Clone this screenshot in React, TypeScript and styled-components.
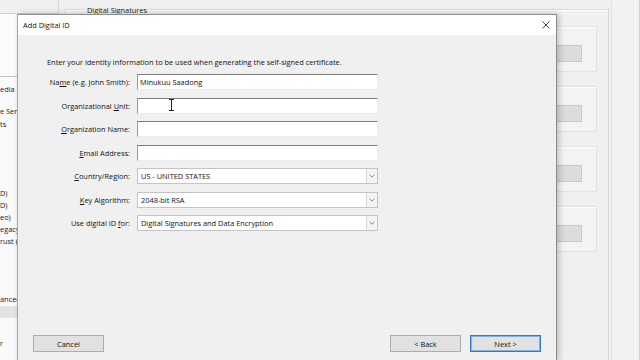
import React from "react";
import styled, { createGlobalStyle } from "styled-components";

type TreeItem = { text: string; gap: number; selected?: boolean };

const treeItems: TreeItem[] = [
  { text: "edia", gap: 6 },
  { text: "e Services", gap: 10 },
  { text: "ts", gap: 1 },
  { text: "D)", gap: 57 },
  { text: "D)", gap: 0 },
  { text: "eo)", gap: 0 },
  { text: "egacy", gap: 0 },
  { text: "rust (", gap: 0 },
  { text: "anced", gap: 46 },
  { text: "", gap: 1, selected: true },
  { text: "r", gap: 19 },
];

type Field = {
  label: React.ReactNode;
  kind: "text" | "select";
  value?: string;
};

const fields: Field[] = [
  {
    label: (
      <>
        Na<u>m</u>e (e.g. John Smith):
      </>
    ),
    kind: "text",
    value: "Minukuu Saadong",
  },
  {
    label: (
      <>
        Organizational <u>U</u>nit:
      </>
    ),
    kind: "text",
  },
  {
    label: (
      <>
        <u>O</u>rganization Name:
      </>
    ),
    kind: "text",
  },
  {
    label: (
      <>
        <u>E</u>mail Address:
      </>
    ),
    kind: "text",
  },
  {
    label: (
      <>
        <u>C</u>ountry/Region:
      </>
    ),
    kind: "select",
    value: "US - UNITED STATES",
  },
  {
    label: (
      <>
        <u>K</u>ey Algorithm:
      </>
    ),
    kind: "select",
    value: "2048-bit RSA",
  },
  {
    label: (
      <>
        Use digital ID <u>f</u>or:
      </>
    ),
    kind: "select",
    value: "Digital Signatures and Data Encryption",
  },
];

export const App: React.FC = (): JSX.Element => {
  return (
    <Screen>
      <GlobalStyle />
      <Backdrop>
        <TreePane>
          <PaneHead />
          <PaneTools />
          <Tree>
            {treeItems.map((item, i) => (
              <TreeRow key={i} $gap={item.gap} $selected={item.selected}>
                {item.text}
              </TreeRow>
            ))}
          </Tree>
        </TreePane>
        <MainPane>
          <Group>
            <Legend>Digital Signatures</Legend>
            <Cards>
              {[0, 1, 2, 3].map((i) => (
                <Card key={i}>
                  <CardButton />
                </Card>
              ))}
            </Cards>
          </Group>
        </MainPane>
        <SideStrip />
      </Backdrop>

      <Dialog>
        <TitleBar>
          <span>Add Digital ID</span>
          <Close>
            <svg width="8" height="8" viewBox="0 0 8 8">
              <path d="M0.5 0.5L7.5 7.5M7.5 0.5L0.5 7.5" stroke="#333" strokeWidth="0.9" />
            </svg>
          </Close>
        </TitleBar>
        <Body>
          <Intro>
            Enter your identity information to be used when generating the
            self-signed certificate.
          </Intro>
          <Form>
            {fields.map((f, i) => (
              <React.Fragment key={i}>
                <Label>{f.label}</Label>
                {f.kind === "text" ? (
                  <TextBox>{f.value}</TextBox>
                ) : (
                  <Combo>
                    <ComboValue>{f.value}</ComboValue>
                    <ComboArrow>
                      <svg width="6" height="4" viewBox="0 0 6 4">
                        <path d="M0.5 0.8L3 3.2L5.5 0.8" fill="none" stroke="#777" strokeWidth="0.9" />
                      </svg>
                    </ComboArrow>
                  </Combo>
                )}
              </React.Fragment>
            ))}
          </Form>
          <Footer>
            <Button>Cancel</Button>
            <ButtonGroup>
              <Button>&lt; Back</Button>
              <Button $primary>Next &gt;</Button>
            </ButtonGroup>
          </Footer>
        </Body>
      </Dialog>

      <Cursor width="7" height="12" viewBox="0 0 7 12">
        <path d="M1 0.5H6M3.5 0.5V11.5M1 11.5H6" stroke="#222" strokeWidth="1" fill="none" />
      </Cursor>
    </Screen>
  );
};

const GlobalStyle = createGlobalStyle`
  html, body {
    margin: 0;
    padding: 0;
    background: #f0f0f0;
  }
  body {
    font-family: "Open Sans", "Noto Sans", sans-serif;
    color: #111;
  }
`;

const Screen = styled.div`
  width: 640px;
  height: 360px;
  position: relative;
  overflow: hidden;
  background: #f0f0f0;
  font-size: 7.4px;
`;

const Backdrop = styled.div`
  display: flex;
  height: 360px;
`;

const TreePane = styled.div`
  width: 58px;
  display: flex;
  flex-direction: column;
  background: #f7f7f7;
  border-right: 1px solid #d6d6d6;
`;

const PaneHead = styled.div`
  height: 13px;
  background: #f0f0f0;
  border-bottom: 1px solid #d2d2d2;
`;

const PaneTools = styled.div`
  height: 62px;
  background: #fbfbfb;
  border-bottom: 1px solid #c8c8c8;
`;

const Tree = styled.div`
  display: flex;
  flex-direction: column;
  background: #fafafa;
  flex: 1;
`;

const TreeRow = styled.div<{ $gap: number; $selected?: boolean }>`
  height: 12px;
  line-height: 12px;
  margin-top: ${(p) => p.$gap}px;
  white-space: nowrap;
  background: ${(p) => (p.$selected ? "#e3e3e3" : "transparent")};
  color: #222;
`;

const MainPane = styled.div`
  flex: 1;
  padding: 9px 0 0 6px;
  display: flex;
`;

const Group = styled.div`
  flex: 1;
  position: relative;
  border: 1px solid #d9d9d9;
  border-bottom: none;
  box-shadow: inset 1px 1px 0 #fff;
  padding: 16px 11px 0 20px;
`;

const Legend = styled.span`
  position: absolute;
  top: -6px;
  left: 19px;
  padding: 0 2px;
  background: #f0f0f0;
  line-height: 12px;
  color: #222;
`;

const Cards = styled.div`
  display: flex;
  flex-direction: column;
  gap: 14px;
`;

const Card = styled.div`
  height: 46px;
  border: 1px solid #e2e2e2;
  box-shadow: inset 1px 1px 0 #fff;
  background: #f3f3f3;
  display: flex;
  justify-content: flex-end;
  align-items: flex-start;
  padding: 18px 14px 0 0;
  box-sizing: border-box;
`;

const CardButton = styled.div`
  width: 60px;
  height: 17px;
  box-sizing: border-box;
  background: #dcdcdc;
  border: 1px solid #c9c9c9;
`;

const SideStrip = styled.div`
  width: 27px;
  margin-left: 2px;
  border-left: 1px solid #e2e2e2;
  border-right: 1px solid #d0d0d0;
  background: #f2f2f2;
`;

const Dialog = styled.div`
  position: absolute;
  left: 17px;
  top: 14px;
  width: 540px;
  height: 347px;
  box-sizing: border-box;
  border: 1px solid #8c8c8c;
  border-left-color: #a6a6a6;
  background: #f0f0f0;
  box-shadow: 2px 0 6px rgba(0, 0, 0, 0.22);
  display: flex;
  flex-direction: column;
`;

const TitleBar = styled.div`
  height: 20px;
  flex-shrink: 0;
  background: #fff;
  display: flex;
  align-items: center;
  justify-content: space-between;
  padding: 0 6px 0 5px;
  color: #111;
`;

const Close = styled.div`
  display: flex;
  align-items: center;
`;

const Body = styled.div`
  flex: 1;
  display: flex;
  flex-direction: column;
  padding: 21px 15px 8px 29px;
`;

const Intro = styled.div`
  line-height: 12px;
  height: 12px;
  white-space: nowrap;
`;

const Form = styled.div`
  margin-top: 6px;
  display: grid;
  grid-template-columns: 83px 241px;
  column-gap: 7px;
  row-gap: 7.5px;
`;

const Label = styled.div`
  text-align: right;
  align-self: center;
  white-space: nowrap;
  line-height: 12px;

  u {
    text-underline-offset: 1px;
  }
`;

const TextBox = styled.div`
  height: 16px;
  box-sizing: border-box;
  background: #fff;
  border-top: 1px solid #7d7d7d;
  border-left: 1px solid #9a9a9a;
  border-right: 1px solid #ececec;
  border-bottom: 1px solid #ececec;
  padding-left: 2px;
  line-height: 14px;
  white-space: nowrap;
`;

const Combo = styled.div`
  height: 16px;
  box-sizing: border-box;
  background: #fff;
  border: 1px solid #c4c4c4;
  display: flex;
`;

const ComboValue = styled.div`
  flex: 1;
  padding-left: 3px;
  line-height: 14px;
  white-space: nowrap;
`;

const ComboArrow = styled.div`
  width: 10px;
  display: flex;
  align-items: center;
  justify-content: center;
  background: #f4f4f4;
  border-left: 1px solid #dadada;
`;

const Footer = styled.div`
  margin-top: auto;
  margin-left: -14px;
  display: flex;
  justify-content: space-between;
`;

const ButtonGroup = styled.div`
  display: flex;
  gap: 9px;
`;

const Button = styled.div<{ $primary?: boolean }>`
  width: 71px;
  height: 17px;
  box-sizing: border-box;
  background: #e1e1e1;
  border: 1px solid ${(p) => (p.$primary ? "#2a7bd0" : "#adadad")};
  box-shadow: ${(p) => (p.$primary ? "inset 0 0 0 1px #7fb2e5" : "none")};
  display: flex;
  align-items: center;
  justify-content: center;
  color: #111;
`;

const Cursor = styled.svg`
  position: absolute;
  left: 168px;
  top: 99px;
`;

export default App;
